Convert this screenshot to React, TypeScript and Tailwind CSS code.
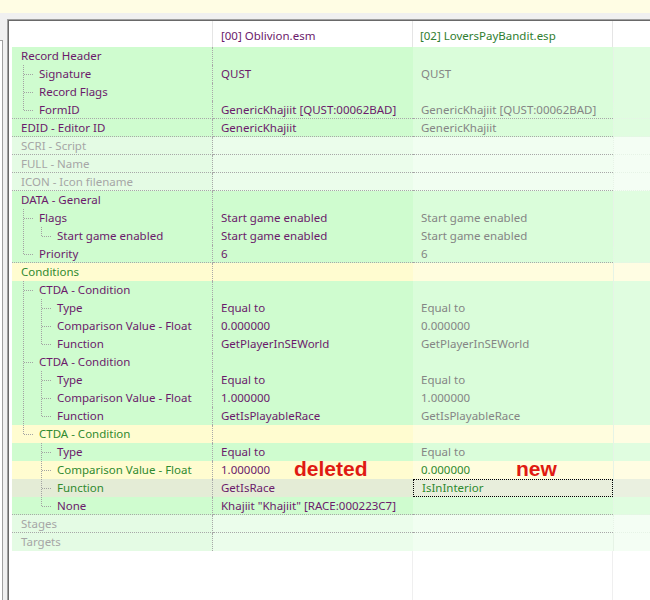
import React from 'react';

type G = 'T' | 'L' | 'I' | ' ';
type Bg = 'g' | 'e' | 'y' | 's';
type Tone = 'p' | 'gr' | 'gy' | 'lg';

interface Row {
  label: string;
  guides: G[];
  bg: Bg;
  lc: Tone;
  c2?: string;
  c2c?: Tone;
  c3?: string;
  c3c?: Tone;
  sep?: boolean;
  focus?: boolean;
  note2?: string;
  note3?: string;
}

const tone: Record<Tone, string> = {
  p: 'text-[#6b1a6b]',
  gr: 'text-[#2f8a2f]',
  gy: 'text-[#858585]',
  lg: 'text-[#a6a6a6]',
};

const bgs: Record<Bg, [string, string, string, string]> = {
  g: ['bg-[#cffccf]', 'bg-[#cffccf]', 'bg-[#dafdda]', 'bg-[#e0fde0]'],
  e: ['bg-[#e4fbe4]', 'bg-[#ebfdeb]', 'bg-[#f1fef1]', 'bg-[#f4fef4]'],
  y: ['bg-[#fffcd0]', 'bg-[#fffcd0]', 'bg-[#fffdde]', 'bg-[#fffde3]'],
  s: ['bg-[#e4ecd6]', 'bg-[#e4ecd6]', 'bg-[#e8eedc]', 'bg-[#eaf0e0]'],
};

const rows: Row[] = [
  { label: 'Record Header', guides: [], bg: 'g', lc: 'p' },
  { label: 'Signature', guides: ['T'], bg: 'g', lc: 'p', c2: 'QUST', c2c: 'p', c3: 'QUST', c3c: 'gy' },
  { label: 'Record Flags', guides: ['T'], bg: 'g', lc: 'p' },
  { label: 'FormID', guides: ['L'], bg: 'g', lc: 'p', c2: 'GenericKhajiit [QUST:00062BAD]', c2c: 'p', c3: 'GenericKhajiit [QUST:00062BAD]', c3c: 'gy', sep: true },
  { label: 'EDID - Editor ID', guides: [], bg: 'g', lc: 'p', c2: 'GenericKhajiit', c2c: 'p', c3: 'GenericKhajiit', c3c: 'gy', sep: true },
  { label: 'SCRI - Script', guides: [], bg: 'e', lc: 'lg', sep: true },
  { label: 'FULL - Name', guides: [], bg: 'e', lc: 'lg', sep: true },
  { label: 'ICON - Icon filename', guides: [], bg: 'e', lc: 'lg', sep: true },
  { label: 'DATA - General', guides: [], bg: 'g', lc: 'p' },
  { label: 'Flags', guides: ['T'], bg: 'g', lc: 'p', c2: 'Start game enabled', c2c: 'p', c3: 'Start game enabled', c3c: 'gy' },
  { label: 'Start game enabled', guides: ['I', 'L'], bg: 'g', lc: 'p', c2: 'Start game enabled', c2c: 'p', c3: 'Start game enabled', c3c: 'gy' },
  { label: 'Priority', guides: ['L'], bg: 'g', lc: 'p', c2: '6', c2c: 'p', c3: '6', c3c: 'gy', sep: true },
  { label: 'Conditions', guides: [], bg: 'y', lc: 'gr' },
  { label: 'CTDA - Condition', guides: ['T'], bg: 'g', lc: 'p' },
  { label: 'Type', guides: ['I', 'T'], bg: 'g', lc: 'p', c2: 'Equal to', c2c: 'p', c3: 'Equal to', c3c: 'gy' },
  { label: 'Comparison Value - Float', guides: ['I', 'T'], bg: 'g', lc: 'p', c2: '0.000000', c2c: 'p', c3: '0.000000', c3c: 'gy' },
  { label: 'Function', guides: ['I', 'L'], bg: 'g', lc: 'p', c2: 'GetPlayerInSEWorld', c2c: 'p', c3: 'GetPlayerInSEWorld', c3c: 'gy' },
  { label: 'CTDA - Condition', guides: ['T'], bg: 'g', lc: 'p' },
  { label: 'Type', guides: ['I', 'T'], bg: 'g', lc: 'p', c2: 'Equal to', c2c: 'p', c3: 'Equal to', c3c: 'gy' },
  { label: 'Comparison Value - Float', guides: ['I', 'T'], bg: 'g', lc: 'p', c2: '1.000000', c2c: 'p', c3: '1.000000', c3c: 'gy' },
  { label: 'Function', guides: ['I', 'L'], bg: 'g', lc: 'p', c2: 'GetIsPlayableRace', c2c: 'p', c3: 'GetIsPlayableRace', c3c: 'gy' },
  { label: 'CTDA - Condition', guides: ['L'], bg: 'y', lc: 'gr' },
  { label: 'Type', guides: [' ', 'T'], bg: 'g', lc: 'p', c2: 'Equal to', c2c: 'p', c3: 'Equal to', c3c: 'gy' },
  { label: 'Comparison Value - Float', guides: [' ', 'T'], bg: 'y', lc: 'gr', c2: '1.000000', c2c: 'p', c3: '0.000000', c3c: 'gr', note2: 'deleted', note3: 'new' },
  { label: 'Function', guides: [' ', 'T'], bg: 's', lc: 'gr', c2: 'GetIsRace', c2c: 'p', c3: 'IsInInterior', c3c: 'gr', focus: true },
  { label: 'None', guides: [' ', 'L'], bg: 'g', lc: 'p', c2: 'Khajiit "Khajiit" [RACE:000223C7]', c2c: 'p', sep: true },
  { label: 'Stages', guides: [], bg: 'e', lc: 'lg', sep: true },
  { label: 'Targets', guides: [], bg: 'e', lc: 'lg' },
];

function Guide({ g }: { g: G }) {
  const stroke = '#a3a3a3';
  return (
    <svg width="18" height="18" viewBox="0 0 18 18" className="shrink-0" shapeRendering="crispEdges">
      {(g === 'T' || g === 'I') && (
        <line x1="2.5" y1="0" x2="2.5" y2="18" stroke={stroke} strokeWidth="1" strokeDasharray="1 1" />
      )}
      {g === 'L' && <line x1="2.5" y1="0" x2="2.5" y2="9" stroke={stroke} strokeWidth="1" strokeDasharray="1 1" />}
      {(g === 'T' || g === 'L') && (
        <line x1="3" y1="9.5" x2="12" y2="9.5" stroke={stroke} strokeWidth="1" strokeDasharray="1 1" />
      )}
    </svg>
  );
}

function TreeRow({ r }: { r: Row }) {
  const b = bgs[r.bg];
  const sep = r.sep ? 'border-b border-dotted border-[#a8a8a8]' : '';
  return (
    <div className="flex h-[18px] leading-[18px]">
      <div className={`w-[201px] shrink-0 flex pl-[9px] border-r border-dotted border-r-[#a8a8a8] ${b[0]} ${sep}`}>
        {r.guides.map((g, i) => (
          <Guide key={i} g={g} />
        ))}
        <span className={`whitespace-nowrap ${tone[r.lc]}`}>{r.label}</span>
      </div>
      <div className={`relative w-[200px] shrink-0 pl-[8px] whitespace-nowrap ${b[1]} ${sep}`}>
        {r.c2 && <span className={tone[r.c2c ?? 'p']}>{r.c2}</span>}
        {r.note2 && (
          <span className="absolute left-[81px] top-[-3px] font-['Liberation_Sans',Arial,sans-serif] font-bold text-[21px] leading-[22px] text-[#e01a12]">
            {r.note2}
          </span>
        )}
      </div>
      <div
        className={`relative w-[200px] shrink-0 pl-[8px] whitespace-nowrap ${b[2]} ${sep} ${
          r.focus ? 'border border-dotted border-black pl-[7px] leading-[16px]' : ''
        }`}
      >
        {r.c3 && <span className={tone[r.c3c ?? 'gy']}>{r.c3}</span>}
        {r.note3 && (
          <span className="absolute left-[103px] top-[-3px] font-['Liberation_Sans',Arial,sans-serif] font-bold text-[21px] leading-[22px] text-[#e01a12]">
            {r.note3}
          </span>
        )}
      </div>
      <div className={`flex-1 border-l border-[#e6f3e6] ${b[3]} ${sep}`} />
    </div>
  );
}

export default function App() {
  return (
    <div className="w-[650px] h-[600px] overflow-hidden bg-[#f0f0f0] flex flex-col font-['Noto_Sans',sans-serif] text-[11.5px]">
      <div className="h-[13px] shrink-0 bg-[#fffde4]" />
      <div className="flex flex-1 min-h-0">
        <div className="w-[7px] shrink-0 flex flex-col">
          <div className="h-[27px] shrink-0" />
          <div className="flex-1 w-[3px] bg-white border-t border-r border-[#a0a0a0]" />
        </div>
        <div className="flex-1 mt-[6px] flex flex-col border-l border-t border-[#a0a0a0]">
          <div className="flex-1 flex flex-col border-l border-t border-[#696969] bg-white pl-[3px]">
            <div className="flex h-[26px] shrink-0 items-center bg-white">
              <div className="w-[201px] shrink-0 h-full border-r border-[#e5e5e5]" />
              <div className="w-[200px] shrink-0 h-full pl-[8px] pt-[3px] flex items-center border-r border-[#e5e5e5] text-[#6b1a6b] whitespace-nowrap">
                [00] Oblivion.esm
              </div>
              <div className="w-[200px] shrink-0 h-full pl-[7px] pt-[3px] flex items-center border-r border-[#e5e5e5] text-[#2f7d2f] whitespace-nowrap">
                [02] LoversPayBandit.esp
              </div>
              <div className="flex-1" />
            </div>
            <div className="flex flex-col">
              {rows.map((r, i) => (
                <TreeRow key={i} r={r} />
              ))}
            </div>
            <div className="flex flex-1">
              <div className="w-[201px] shrink-0" />
              <div className="w-[200px] shrink-0 border-r border-[#efefef]" />
              <div className="w-[200px] shrink-0 border-r border-[#efefef]" />
              <div className="flex-1" />
            </div>
          </div>
        </div>
      </div>
    </div>
  );
}
